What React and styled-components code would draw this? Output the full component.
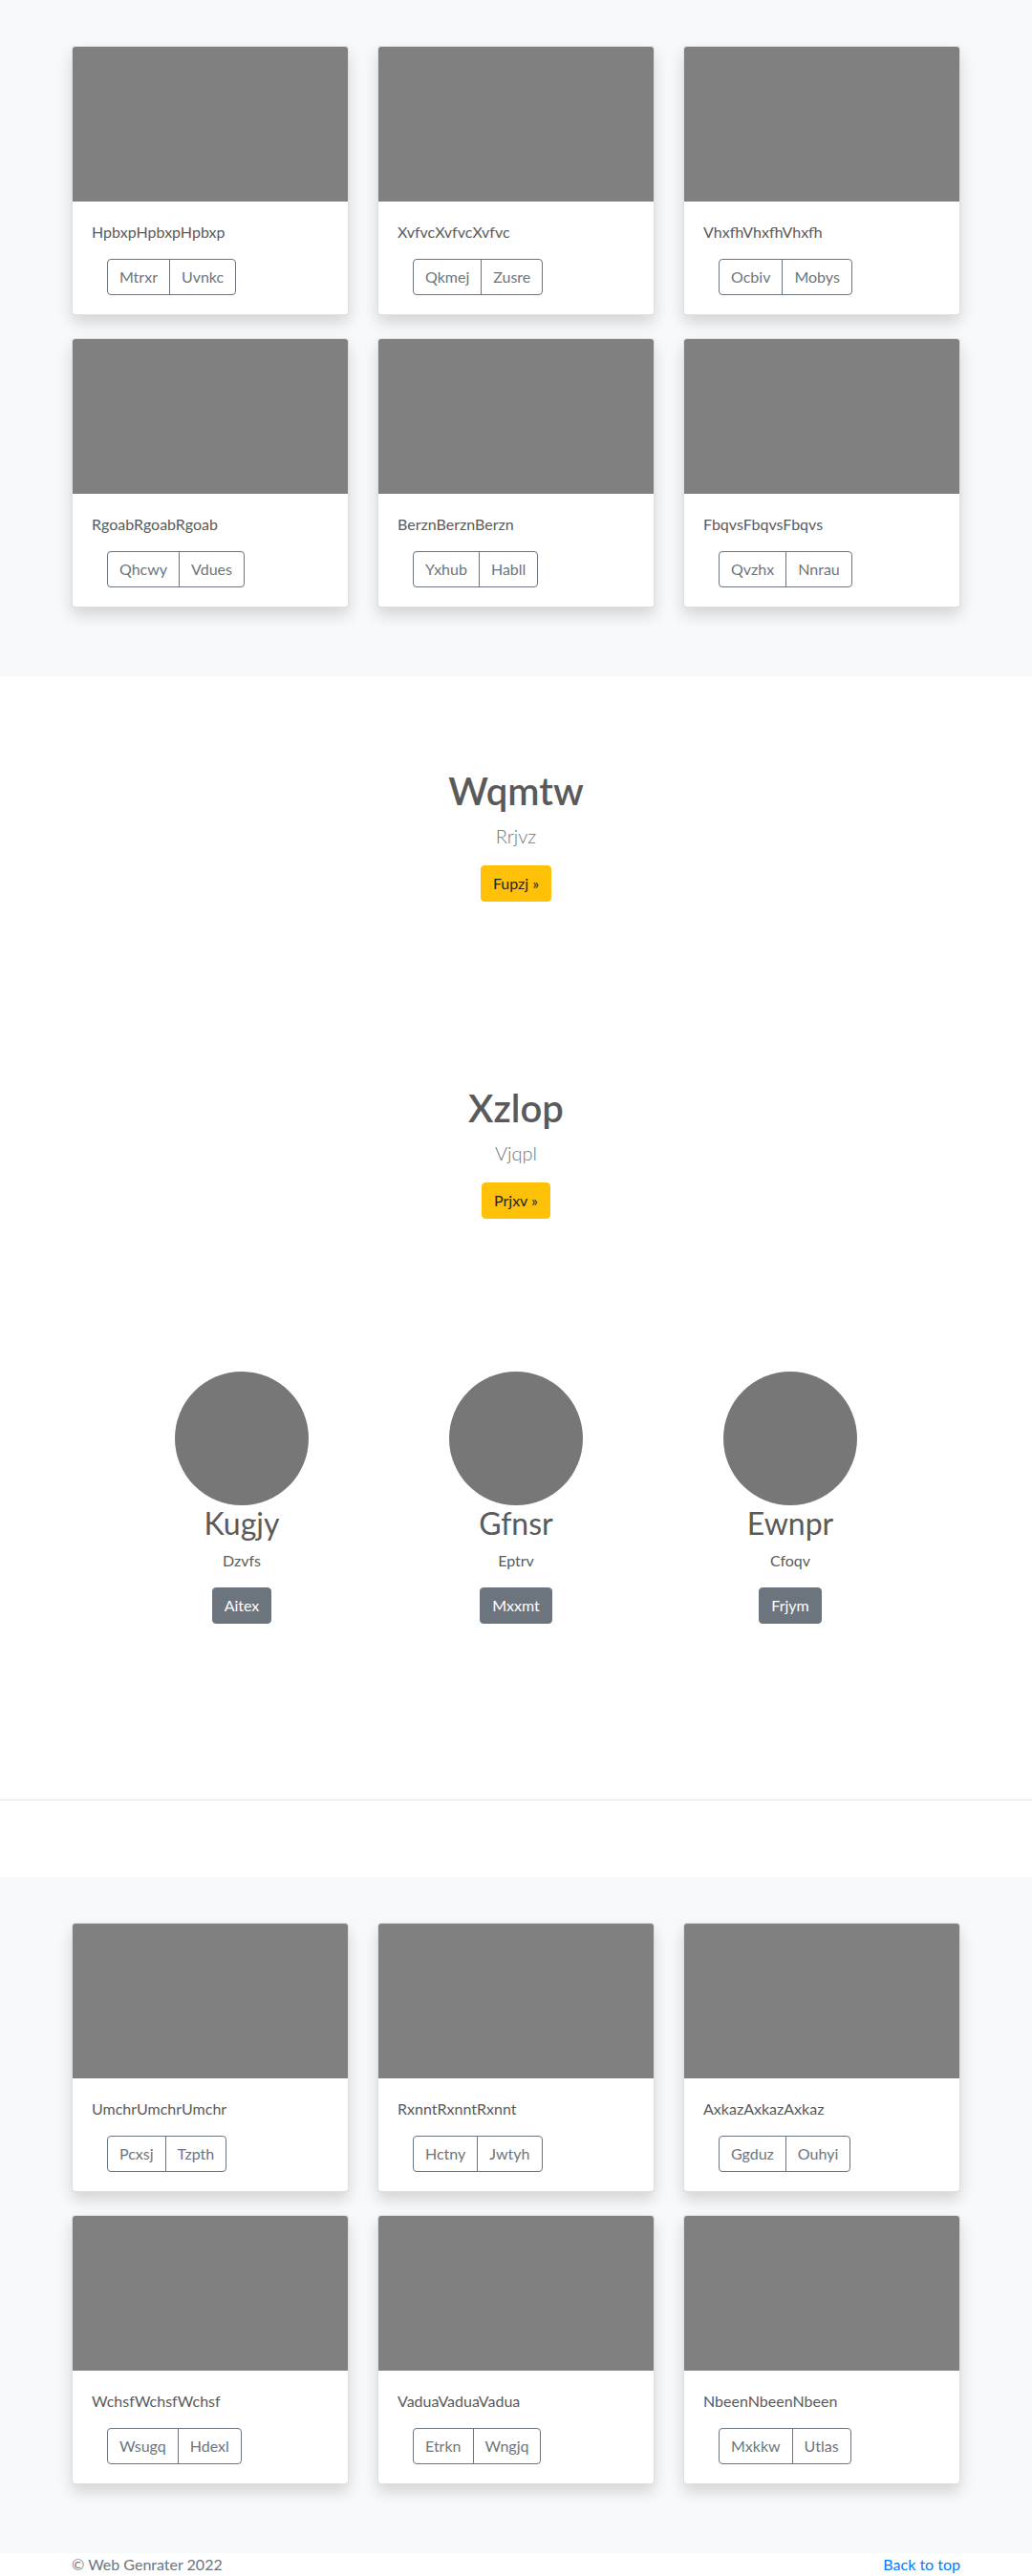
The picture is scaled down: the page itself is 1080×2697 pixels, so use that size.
import React from 'react';
import styled, { createGlobalStyle } from 'styled-components';

const GlobalStyle = createGlobalStyle`
    * {
        box-sizing: border-box;
    }
    body {
        margin: 0;
        font-family: Lato, "Open Sans", "Liberation Sans", sans-serif;
        font-size: 16px;
        line-height: 1.5;
        color: #5a5a5a;
        background-color: #fff;
    }
`;

const albumTop = [
    { title: 'Hpbxp', actions: ['Mtrxr', 'Uvnkc'] },
    { title: 'Xvfvc', actions: ['Qkmej', 'Zusre'] },
    { title: 'Vhxfh', actions: ['Ocbiv', 'Mobys'] },
    { title: 'Rgoab', actions: ['Qhcwy', 'Vdues'] },
    { title: 'Berzn', actions: ['Yxhub', 'Habll'] },
    { title: 'Fbqvs', actions: ['Qvzhx', 'Nnrau'] },
];

const albumBottom = [
    { title: 'Umchr', actions: ['Pcxsj', 'Tzpth'] },
    { title: 'Rxnnt', actions: ['Hctny', 'Jwtyh'] },
    { title: 'Axkaz', actions: ['Ggduz', 'Ouhyi'] },
    { title: 'Wchsf', actions: ['Wsugq', 'Hdexl'] },
    { title: 'Vadua', actions: ['Etrkn', 'Wngjq'] },
    { title: 'Nbeen', actions: ['Mxkkw', 'Utlas'] },
];

const heroes = [
    { title: 'Wqmtw', lead: 'Rrjvz', action: 'Fupzj' },
    { title: 'Xzlop', lead: 'Vjqpl', action: 'Prjxv' },
];

const team = [
    { name: 'Kugjy', role: 'Dzvfs', action: 'Aitex' },
    { name: 'Gfnsr', role: 'Eptrv', action: 'Mxxmt' },
    { name: 'Ewnpr', role: 'Cfoqv', action: 'Frjym' },
];

const Album = ({ items }) => (
    <AlbumSection>
        <Container>
            <CardGrid>
                {items.map((item) => (
                    <Card key={item.title}>
                        <CardImage />
                        <CardBody>
                            <CardText>{item.title}{item.title}{item.title}</CardText>
                            <ButtonGroup>
                                {item.actions.map((a) => (
                                    <OutlineButton key={a}>{a}</OutlineButton>
                                ))}
                            </ButtonGroup>
                        </CardBody>
                    </Card>
                ))}
            </CardGrid>
        </Container>
    </AlbumSection>
);

const App = () => {
    return (
        <>
            <GlobalStyle />
            <Album items={albumTop} />

            {heroes.map((h) => (
                <Hero key={h.title}>
                    <HeroTitle>{h.title}</HeroTitle>
                    <Lead>{h.lead}</Lead>
                    <WarningButton>{h.action} »</WarningButton>
                </Hero>
            ))}

            <TeamSection>
                <TeamRow>
                    {team.map((m) => (
                        <Member key={m.name}>
                            <Avatar />
                            <MemberName>{m.name}</MemberName>
                            <MemberRole>{m.role}</MemberRole>
                            <SecondaryButton>{m.action}</SecondaryButton>
                        </Member>
                    ))}
                </TeamRow>
            </TeamSection>

            <Divider />

            <Album items={albumBottom} />

            <Footer>
                <Container>
                    <FooterRow>
                        <Copyright>© Web Genrater 2022</Copyright>
                        <BackLink href="#">Back to top</BackLink>
                    </FooterRow>
                </Container>
            </Footer>
        </>
    );
};

const Container = styled.div`
    max-width: 960px;
    margin: 0 auto;
    padding: 0 15px;
`;

const AlbumSection = styled.section`
    background-color: #f8f9fa;
    padding: 48px 0;
`;

const CardGrid = styled.div`
    display: grid;
    grid-template-columns: repeat(3, 1fr);
    column-gap: 30px;
    row-gap: 24px;
    padding-bottom: 24px;
`;

const Card = styled.div`
    display: flex;
    flex-direction: column;
    background-color: #fff;
    border: 1px solid rgba(0, 0, 0, 0.125);
    border-radius: 4px;
    overflow: hidden;
    box-shadow: 0 8px 16px rgba(0, 0, 0, 0.15);
`;

const CardImage = styled.div`
    height: 162px;
    background-color: #808080;
`;

const CardBody = styled.div`
    padding: 20px;
`;

const CardText = styled.p`
    margin: 0 0 16px;
`;

const ButtonGroup = styled.div`
    display: inline-flex;
    margin-left: 16px;
`;

const OutlineButton = styled.button`
    font-family: inherit;
    font-size: 16px;
    line-height: 1.5;
    padding: 6px 12px;
    color: #6c757d;
    background: transparent;
    border: 1px solid #6c757d;
    border-radius: 0;
    & + & {
        margin-left: -1px;
    }
    &:first-child {
        border-radius: 4px 0 0 4px;
    }
    &:last-child {
        border-radius: 0 4px 4px 0;
    }
`;

const Hero = styled.section`
    padding: 96px 0;
    text-align: center;
`;

const HeroTitle = styled.h1`
    margin: 0 0 8px;
    font-size: 40px;
    font-weight: 600;
    line-height: 1.2;
    color: #5a5a5a;
`;

const Lead = styled.p`
    margin: 0 0 16px;
    font-size: 20px;
    font-weight: 300;
    line-height: 1.5;
    color: #6c757d;
`;

const SolidButton = styled.a`
    display: inline-block;
    font-size: 16px;
    line-height: 1.5;
    padding: 6px 12px;
    border: 1px solid transparent;
    border-radius: 4px;
    text-decoration: none;
    vertical-align: top;
`;

const WarningButton = styled(SolidButton)`
    color: #212529;
    background-color: #ffc107;
    border-color: #ffc107;
`;

const SecondaryButton = styled(SolidButton)`
    color: #fff;
    background-color: #6c757d;
    border-color: #6c757d;
`;

const TeamSection = styled.section`
    padding: 64px 0;
`;

const TeamRow = styled.div`
    width: 861px;
    margin: 0 auto;
    display: grid;
    grid-template-columns: repeat(3, 1fr);
`;

const Member = styled.div`
    display: flex;
    flex-direction: column;
    align-items: center;
    text-align: center;
    padding-bottom: 40px;
`;

const Avatar = styled.div`
    width: 140px;
    height: 140px;
    border-radius: 50%;
    background-color: #777;
`;

const MemberName = styled.h2`
    margin: 0 0 8px;
    font-size: 32px;
    font-weight: 400;
    line-height: 1.2;
`;

const MemberRole = styled.p`
    margin: 0 0 16px;
`;

const Divider = styled.hr`
    margin: 80px 0;
    border: 0;
    border-top: 1px solid rgba(0, 0, 0, 0.1);
`;

const Footer = styled.footer`
    padding: 0;
`;

const FooterRow = styled.div`
    display: flex;
    justify-content: space-between;
`;

const Copyright = styled.p`
    margin: 0;
    color: #6c757d;
`;

const BackLink = styled.a`
    color: #007bff;
    text-decoration: none;
`;

export default App;
